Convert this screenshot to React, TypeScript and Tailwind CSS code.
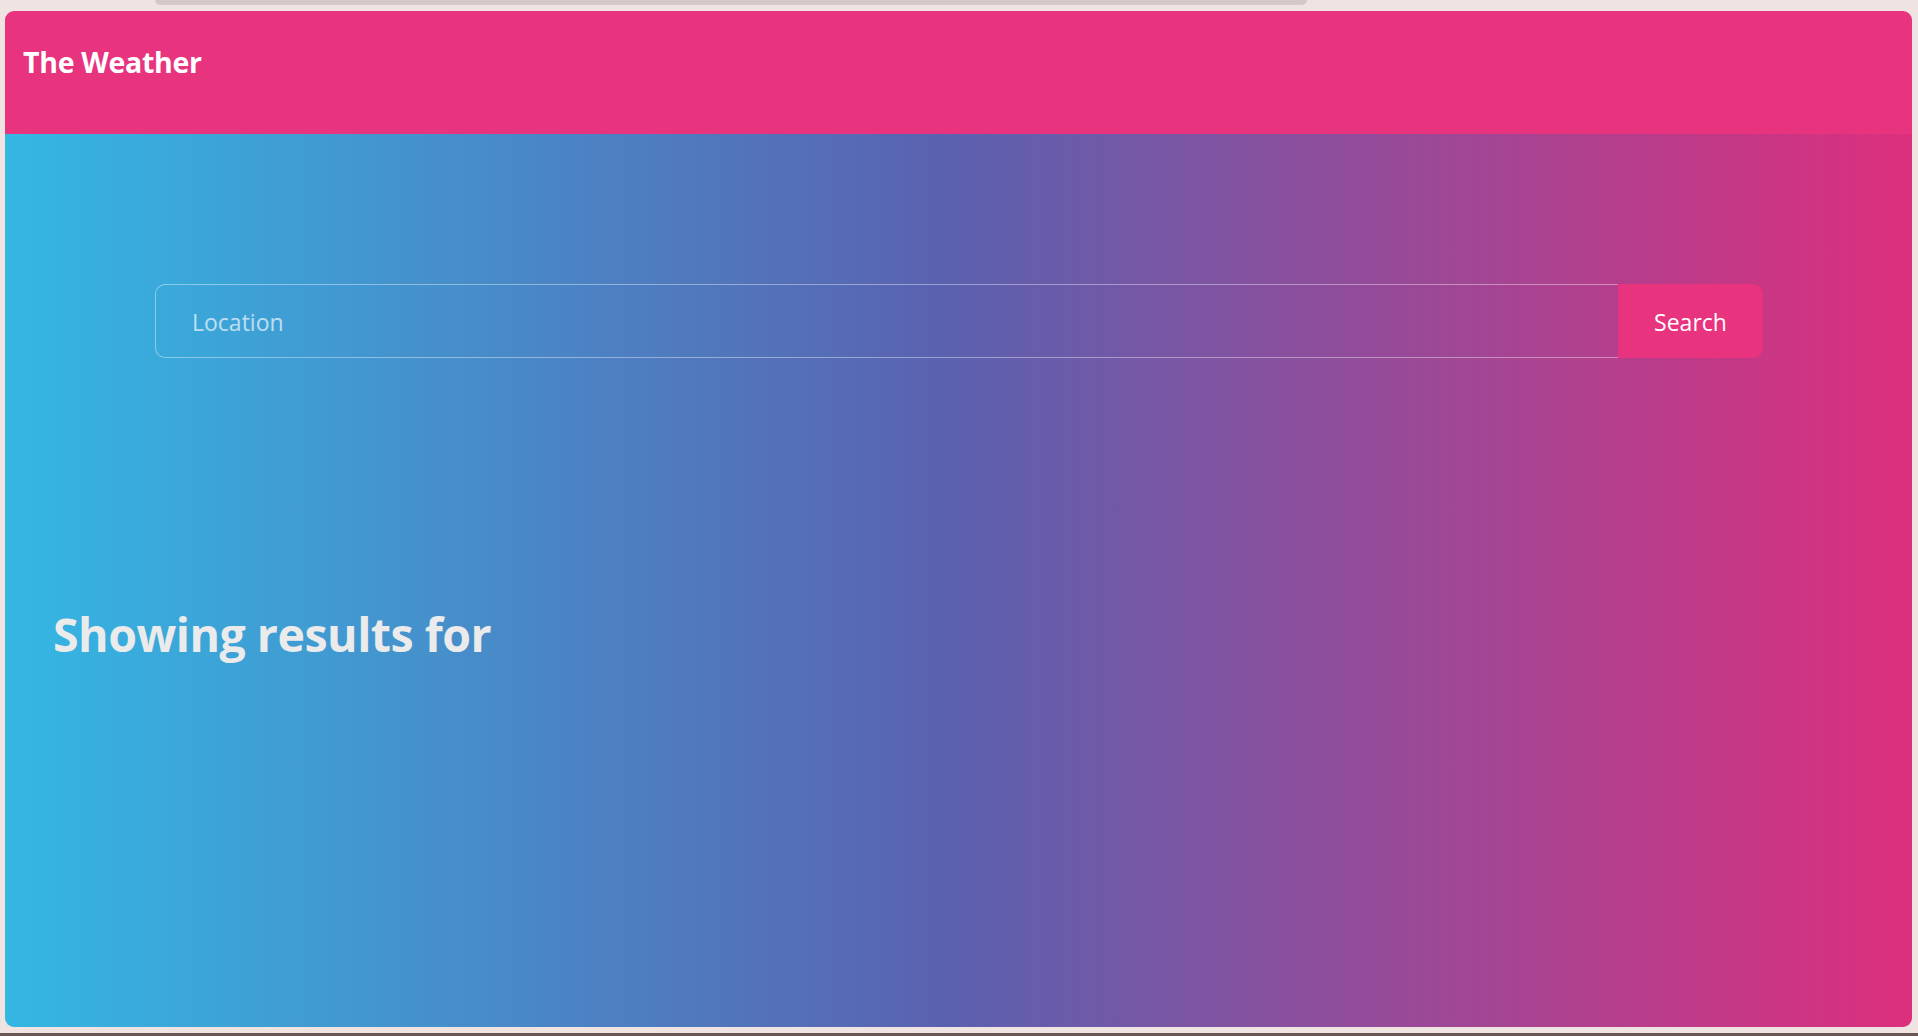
import React from "react";

export default function App() {
  const font = { fontFamily: '"Open Sans", "Noto Sans", sans-serif' };
  return (
    <div className="h-[1036px] w-full bg-[#f0e4e2] flex flex-col overflow-hidden" style={font}>
      <div className="h-[11px] shrink-0">
        <div className="ml-[155px] w-[1152px] h-[5px] rounded-b-[6px] bg-[#d5c9c7]" />
      </div>
      <div className="ml-[5px] mr-[6px] h-[1016px] shrink-0 rounded-[9px] overflow-hidden flex flex-col">
        <header className="h-[123px] shrink-0 bg-[#e8337f] pl-[18px] pt-[31px]">
          <h1 className="text-[28.5px] leading-[40px] font-bold text-white tracking-[-0.3px]">The Weather</h1>
        </header>
        <main className="flex-1 bg-[linear-gradient(to_right,#34b7e3_0%,#5a62b0_49%,#dc2f7d_100%)] flex flex-col">
          <div className="mt-[150px] ml-[150px] w-[1608px] flex h-[74px]">
            <div className="flex-1 h-full rounded-l-[10px] border border-r-0 border-white/40 flex items-center pl-[36px] pt-[3px]">
              <span className="text-[23px] text-white/65">Location</span>
            </div>
            <button className="w-[145px] h-full rounded-r-[10px] bg-[#e8337f] text-white text-[23px] pt-[3px]">Search</button>
          </div>
          <h2 className="mt-[246px] ml-[48px] text-[46.5px] leading-[60px] font-bold text-[#ebebeb] tracking-[-0.5px]">Showing results for</h2>
        </main>
      </div>
      <div className="h-[6px] shrink-0" />
      <div className="h-[3px] shrink-0 bg-[#6b5656]" />
    </div>
  );
}
